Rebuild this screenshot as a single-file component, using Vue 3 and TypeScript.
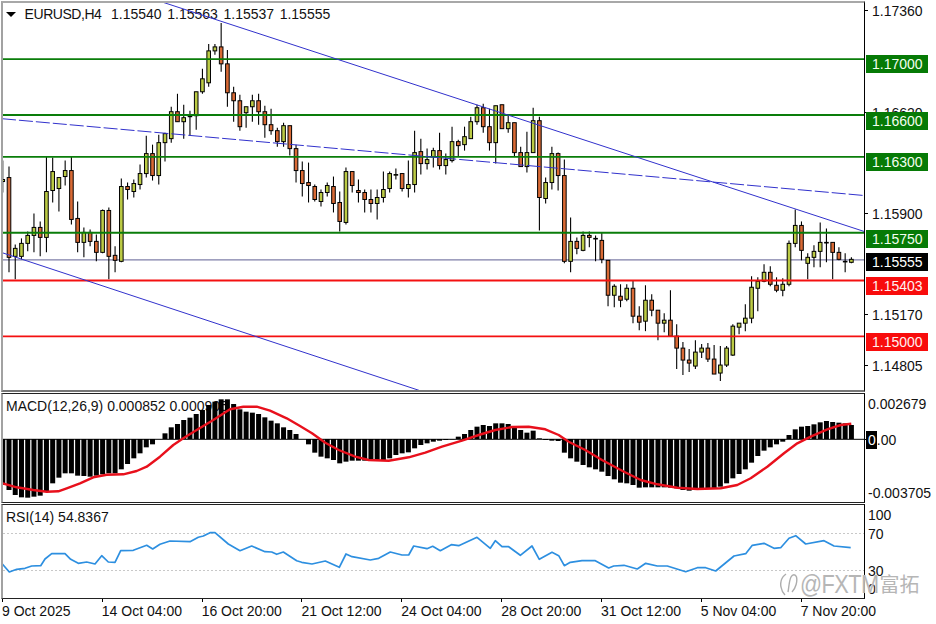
<script setup lang="ts">
type Candle = [number, number, number, number, number];

const candles: Candle[] = [
  [180,182,161,193,1],[178,258,167,273,0],[249,257,245,280,1],[244,257,239,260,1],[236,244,232,252,1],
  [228,236,214,253,1],[228,238,222,257,0],[192,238,157,253,1],[172,191,158,203,1],[178,189,178,212,1],
  [171,177,161,186,1],[171,220,157,225,0],[219,243,202,253,0],[233,243,228,258,1],[233,242,230,247,0],
  [242,253,235,262,0],[211,253,210,254,1],[211,257,208,280,0],[256,261,247,273,0],[187,262,179,263,1],
  [187,190,183,200,0],[184,192,180,198,1],[174,185,165,190,1],[154,174,136,178,1],[154,176,145,181,0],
  [143,176,135,185,1],[134,143,133,162,1],[112,139,107,143,1],[112,122,94,122,0],[118,122,105,139,1],
  [116,117,111,136,1],[92,116,92,130,1],[79,92,69,94,1],[51,83,44,87,1],[47,51,44,55,1],
  [47,64,23,72,0],[64,93,50,107,0],[93,101,87,122,0],[101,127,95,131,0],[107,113,107,128,1],
  [101,107,95,122,1],[101,112,94,125,0],[112,125,106,138,0],[125,131,109,135,0],[131,142,128,147,0],
  [126,142,123,147,1],[126,149,126,156,0],[149,171,145,183,0],[171,184,162,197,0],[183,186,163,203,0],
  [187,200,185,202,0],[193,202,190,207,1],[186,193,183,197,1],[187,204,177,213,0],[203,222,192,232,0],
  [172,223,168,225,1],[172,186,172,193,0],[191,193,180,203,0],[193,200,190,213,0],[200,204,190,213,0],
  [198,204,190,220,1],[190,198,172,203,1],[174,189,172,193,1],[175,175,169,180,1],[174,189,174,192,0],
  [185,189,161,198,1],[153,185,131,193,1],[152,164,139,175,0],[160,164,149,170,1],[151,157,148,168,1],
  [151,166,133,170,0],[160,166,154,175,1],[142,161,127,163,1],[142,146,140,157,0],[137,145,127,151,1],
  [122,139,117,139,1],[108,122,105,125,1],[108,127,104,133,0],[127,143,109,151,0],[106,143,106,164,1],
  [105,129,105,129,0],[123,129,115,133,1],[123,153,123,157,0],[153,167,147,167,0],[153,167,132,173,1],
  [121,153,108,153,1],[121,198,117,231,0],[183,199,178,204,1],[154,183,147,190,1],[154,176,153,191,0],
  [176,262,160,264,0],[242,262,218,273,1],[242,249,238,255,0],[236,251,232,252,1],[236,238,232,248,0],
  [239,239,236,262,0],[241,260,233,264,0],[261,296,261,307,0],[287,296,285,308,1],[297,301,285,308,0],
  [289,300,285,302,1],[289,317,281,324,0],[317,323,307,331,0],[301,322,286,332,1],[301,311,295,317,0],
  [311,324,311,341,0],[321,324,314,333,1],[321,337,291,337,0],[337,349,325,370,0],[349,361,343,376,0],
  [361,364,350,373,0],[353,367,341,370,1],[349,353,345,359,1],[349,360,344,363,0],[360,375,346,375,0],
  [366,374,347,382,1],[349,366,347,368,1],[327,356,325,357,1],[324,328,324,335,1],[319,324,305,332,1],
  [288,319,277,324,1],[282,289,278,312,1],[273,282,265,283,1],[273,285,267,287,0],[286,291,278,293,0],
  [285,291,279,297,1],[244,285,241,287,1],[226,244,210,248,1],[226,251,222,261,0],[258,264,254,280,1],
  [252,258,246,268,1],[243,252,223,268,1],[243,243,229,263,1],[243,253,243,280,0],[253,260,248,261,0],
  [262,262,254,273,0],[260,263,258,264,1],
];

const barTips: number[] = [
  285,300,315,322,323,320,317,305,280,263,250,250,257,258,260,257,253,250,250,238,222,205,190,172,163,
  147,130,112,102,90,83,72,60,45,35,28,28,42,58,65,68,72,82,92,100,112,120,132,147,163,
  188,200,205,210,220,215,212,212,212,212,212,212,205,195,190,187,175,165,160,155,152,150,148,140,132,
  120,110,105,108,100,100,102,110,120,128,122,145,150,152,153,188,205,215,225,232,238,245,258,268,278,
  280,285,293,292,292,292,292,293,295,300,302,300,297,297,295,290,280,265,252,238,218,198,182,172,163,
  155,135,118,110,108,103,97,93,96,98,100,105,
];

const signalRaw: [number, number[]][] = [
  [0, [8,280,50,292,100,300,140,305,175,304,200,295,240,280,280,262,320,254,370,253,410,243,440,230,480,200,520,165,550,145,590,120,640,90,690,58,730,50,770,50,810,62,860,85,900,108]],
  [312, [0,130,40,158,80,180,130,200,170,210,230,212,290,202,340,188,390,170,450,152,500,135,550,120,600,111,650,110,700,118,740,135,770,155,820,180,870,210]],
  [624, [0,245,50,270,100,283,160,293,220,297,290,295,340,285,380,265,430,230,480,190,520,160,560,140,610,118,650,105,682,101]],
];

const rsiRaw: [number, number[]][] = [
  [0, [5,520,28,546,50,538,75,535,95,528,122,527,135,507,155,491,195,491,212,508,235,520,260,516,285,522,305,497,325,516,345,517,362,482,400,481,440,466,458,477,480,463,510,453,570,455,595,442,610,438,630,428,645,428,685,462,720,482,755,468,795,485,815,486,830,493,850,486,890,512,905,517]],
  [312, [0,522,40,513,82,532,102,492,120,500,175,510,200,505,235,486,270,495,290,495,305,468,345,476,362,469,385,482,418,464,440,467,495,442,535,475,550,452,570,470,590,470,625,496,660,468,682,508,720,487,740,497,757,527,775,517,810,512,850,512,890,534,905,528]],
  [624, [0,526,40,537,65,520,100,528,130,528,185,545,220,533,245,533,275,543,330,498,365,491,385,466,420,460,450,475,470,473,495,445,515,437,545,462,600,452,630,468,680,473]],
];

function toPoints(raw: [number, number[]][]): string {
  const out: string[] = [];
  for (const [offset, values] of raw) {
    for (let i = 0; i < values.length; i += 2) {
      out.push(`${(offset + values[i] / 3).toFixed(1)},${(390 + values[i + 1] / 3).toFixed(1)}`);
    }
  }
  return out.join(" ");
}

const barX = (i: number): number => 2.76 + 6.24 * i;
const signalPoints = toPoints(signalRaw);
const rsiPoints = toPoints(rsiRaw);

const bars = barTips.map((tip, i) => {
  const y = 390 + tip / 3;
  return { x: barX(i) - 2.5, y: Math.min(y, 439), h: Math.abs(y - 439) };
});

const levels = [
  { y: 59.3, cls: "lvl-green" },
  { y: 115.3, cls: "lvl-green" },
  { y: 157.3, cls: "lvl-green" },
  { y: 233.3, cls: "lvl-green" },
  { y: 281.2, cls: "lvl-red" },
  { y: 337.2, cls: "lvl-red" },
];

const mainLabels = [
  { text: "1.17360", top: 1, cls: "plain" },
  { text: "1.16620", top: 103, cls: "plain" },
  { text: "1.15900", top: 204, cls: "plain" },
  { text: "1.15170", top: 305, cls: "plain" },
  { text: "1.14805", top: 356, cls: "plain" },
  { text: "1.17000", top: 54, cls: "green" },
  { text: "1.16600", top: 111, cls: "green" },
  { text: "1.16300", top: 152, cls: "green" },
  { text: "1.15750", top: 229, cls: "green" },
  { text: "1.15555", top: 252, cls: "black" },
  { text: "1.15403", top: 276, cls: "red" },
  { text: "1.15000", top: 332, cls: "red" },
];

const rsiLabels = [
  { text: "100", top: 2 },
  { text: "70", top: 21 },
  { text: "30", top: 58 },
  { text: "0", top: 76 },
];

const times = [
  "9 Oct 2025", "14 Oct 04:00", "16 Oct 20:00", "21 Oct 12:00", "24 Oct 04:00",
  "28 Oct 20:00", "31 Oct 12:00", "5 Nov 04:00", "7 Nov 20:00",
];
</script>

<template>
  <div class="terminal">
    <section class="pane pane-main">
      <div class="plot">
        <div class="legend legend-main">
          <span class="caret"></span>
          <span class="symbol">EURUSD,H4</span>
          <span>1.15540</span><span>1.15563</span><span>1.15537</span><span>1.15555</span>
        </div>
        <svg class="canvas" viewBox="3 3 861 388" preserveAspectRatio="none">
          <line class="price-line" x1="3" y1="260.5" x2="864" y2="260.5" />
          <g v-for="(c, i) in candles" :key="i">
            <line class="wick" :x1="barX(i)" :y1="c[2]" :x2="barX(i)" :y2="c[3]" />
            <rect
              :class="c[4] ? 'body-up' : 'body-down'"
              :x="barX(i) - 1.8"
              :y="c[0]"
              width="3.6"
              :height="Math.max(c[1] - c[0], 0.6)"
            />
          </g>
          <line v-for="l in levels" :key="l.y" :class="l.cls" x1="3" :y1="l.y" x2="864" :y2="l.y" />
          <line class="trend" x1="156" y1="0" x2="864" y2="232" />
          <line class="trend" x1="2" y1="253.3" x2="424" y2="393" />
          <line class="trend dashed" x1="2" y1="119" x2="864" y2="196" />
        </svg>
      </div>
      <div class="axis">
        <div
          v-for="l in mainLabels"
          :key="l.text"
          class="tag"
          :class="l.cls"
          :style="{ top: l.top + 'px' }"
        >{{ l.text }}</div>
      </div>
    </section>

    <section class="pane pane-macd">
      <div class="plot plot-sub">
        <div class="legend legend-sub">MACD(12,26,9) 0.000852 0.000906</div>
        <svg class="canvas" viewBox="3 394 861 108" preserveAspectRatio="none">
          <rect v-for="(b, i) in bars" :key="i" class="bar" :x="b.x" :y="b.y" width="5" :height="b.h" />
          <line class="zero" x1="3" y1="439.3" x2="864" y2="439.3" />
          <polyline class="signal" :points="signalPoints" />
        </svg>
      </div>
      <div class="axis">
        <div class="tag plain scale" style="top: 2px">0.002679</div>
        <div class="zero-tag"><span class="zero-box">0</span>.00</div>
        <div class="tag plain scale" style="top: 91px">-0.003705</div>
      </div>
    </section>

    <section class="pane pane-rsi">
      <div class="plot plot-sub">
        <div class="legend legend-sub">RSI(14) 54.8367</div>
        <svg class="canvas" viewBox="3 505 861 93" preserveAspectRatio="none">
          <line class="dotted" x1="3" y1="533.5" x2="864" y2="533.5" />
          <line class="dotted" x1="3" y1="570.5" x2="864" y2="570.5" />
          <polyline class="rsi" :points="rsiPoints" />
        </svg>
      </div>
      <div class="axis">
        <div
          v-for="l in rsiLabels"
          :key="l.text"
          class="tag plain scale"
          :style="{ top: l.top + 'px' }"
        >{{ l.text }}</div>
      </div>
    </section>

    <div class="time-axis">
      <span v-for="t in times" :key="t" class="time">{{ t }}</span>
    </div>

    <div class="watermark">
      <svg class="wm-logo" viewBox="0 0 18 24">
        <path d="M6 2 C2 5 0 10 1 15 C1.5 18 3 21 5 23" />
        <path d="M8 20 C9 15 9 9 11 5 C12.5 2 15.5 2 16.5 5 C17.5 9 16 16 12 20" />
      </svg>
      <span class="wm-latin">@FXTM</span>
      <span class="wm-cjk">富拓</span>
    </div>
  </div>
</template>

<style scoped>
.terminal {
  position: relative;
  width: 936px;
  height: 624px;
  padding-top: 1px;
  box-sizing: border-box;
  background: #fff;
  color: #111;
  font-family: "Liberation Sans", Arial, sans-serif;
  font-size: 14px;
  line-height: 18px;
  overflow: hidden;
  display: flex;
  flex-direction: column;
}
.pane {
  display: flex;
}
.pane-main {
  height: 391px;
}
.pane-macd {
  height: 110px;
  margin-top: 1px;
}
.pane-rsi {
  height: 95px;
  margin-top: 1px;
}
.plot {
  position: relative;
  width: 864px;
  margin-left: 1px;
  box-sizing: border-box;
  border-left: 2px solid #a2a2a2;
  border-right: 1px solid #000;
  border-top: 2px solid #a8a8a8;
  border-bottom: 2px solid #777;
  flex: none;
}
.plot-sub {
  border-top: 1px solid #222;
  border-bottom: 1px solid #222;
}
.canvas {
  position: absolute;
  inset: 0;
  width: 100%;
  height: 100%;
  display: block;
}
.legend {
  position: absolute;
  left: 3px;
  white-space: nowrap;
}
.legend-main {
  top: 2px;
  display: flex;
  gap: 5.6px;
  align-items: center;
  left: 3px;
}
.caret {
  width: 0;
  height: 0;
  margin-right: 3px;
  border-left: 5px solid transparent;
  border-right: 5px solid transparent;
  border-top: 5px solid #000;
}
.symbol {
  letter-spacing: -0.45px;
  margin-right: 4px;
}
.legend-sub {
  top: 3px;
}
.axis {
  position: relative;
  flex: 1;
}
.tag {
  position: absolute;
  left: 1px;
  width: 62px;
  height: 18px;
  padding-left: 6px;
  box-sizing: border-box;
  white-space: nowrap;
}
.tag.plain {
  left: 0;
  padding-left: 7px;
  width: auto;
  color: #111;
}
.tag.plain::before {
  content: "";
  position: absolute;
  left: 0;
  top: 8px;
  width: 3px;
  height: 1px;
  background: #000;
}
.tag.scale {
  padding-left: 3px;
}
.tag.scale::before {
  display: none;
}
.tag.green {
  background: #067a06;
  color: #f4fff0;
}
.tag.black {
  background: #000;
  color: #fff;
}
.tag.red {
  background: #f80c0c;
  color: #fff0f0;
}
.zero-tag {
  position: absolute;
  left: 0;
  top: 38px;
  height: 18px;
  padding-left: 1px;
  white-space: nowrap;
}
.zero-tag::before {
  content: "";
  position: absolute;
  left: 0;
  top: 8px;
  width: 2px;
  height: 1px;
  background: #000;
}
.zero-box {
  display: inline-block;
  background: #000;
  color: #fff;
  padding: 0 1px 0 2px;
}
.time-axis {
  position: relative;
  display: grid;
  grid-template-columns: repeat(9, 99.84px);
  padding-left: 2px;
  padding-top: 3px;
  height: 25px;
  box-sizing: border-box;
}
.time {
  position: relative;
  white-space: nowrap;
}
.time::before {
  content: "";
  position: absolute;
  left: 0;
  top: -3px;
  width: 1px;
  height: 3px;
  background: #000;
}
.watermark {
  position: absolute;
  left: 780px;
  top: 571px;
  display: flex;
  align-items: center;
  color: #b6b6b6;
  line-height: 26px;
  pointer-events: none;
}
.wm-logo {
  width: 18px;
  height: 24px;
  margin-right: 2px;
  fill: none;
  stroke: #adadad;
  stroke-width: 1.4;
}
.wm-latin {
  display: inline-block;
  font-size: 25px;
  letter-spacing: -0.6px;
  transform: scaleX(0.87);
  transform-origin: left center;
  margin-right: -11px;
  text-shadow: 0 0 1px #fff;
}
.wm-cjk {
  font-family: "Noto Sans CJK SC", sans-serif;
  font-size: 20px;
}
.price-line {
  stroke: #7f7fa8;
  stroke-width: 1.2;
}
.wick {
  stroke: #000;
  stroke-width: 1.1;
}
.body-up {
  fill: #bccb45;
  stroke: #000;
  stroke-width: 1;
}
.body-down {
  fill: #d96a35;
  stroke: #000;
  stroke-width: 1;
}
.lvl-green {
  stroke: #0a7d0a;
  stroke-width: 1.9;
}
.lvl-red {
  stroke: #f41010;
  stroke-width: 1.9;
}
.trend {
  stroke: #3030cc;
  stroke-width: 1;
  fill: none;
}
.dashed {
  stroke-dasharray: 14 3;
}
.bar {
  fill: #000;
}
.zero {
  stroke: #000;
  stroke-width: 1;
}
.signal {
  fill: none;
  stroke: #e8101c;
  stroke-width: 2.4;
  stroke-linejoin: round;
}
.dotted {
  stroke: #c8c8c8;
  stroke-width: 1;
  stroke-dasharray: 2 2;
}
.rsi {
  fill: none;
  stroke: #2d8fe0;
  stroke-width: 1.7;
  stroke-linejoin: round;
}
</style>
